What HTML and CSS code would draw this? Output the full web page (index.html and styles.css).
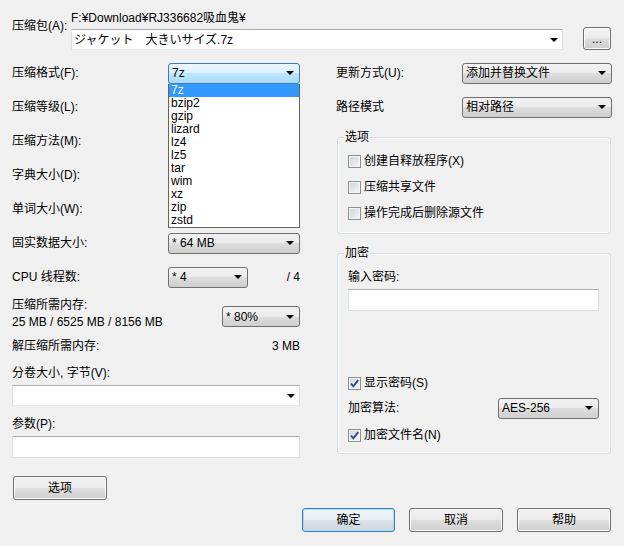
FILE: index.html
```html
<!DOCTYPE html>
<html lang="zh-CN">
<head>
  <meta charset="UTF-8">
  <title>添加到压缩包</title>
  <link rel="stylesheet" href="styles.css">
</head>
<body>
  <div class="dialog">
    <!-- 压缩包路径 -->
    <div class="archive-row">
      <span class="archive-label">压缩包(A):</span>
      <div class="archive-main">
        <div class="archive-path">F:¥Download¥RJ336682吸血鬼¥</div>
        <div class="combo edit"><span>ジャケット　大きいサイズ.7z</span></div>
      </div>
      <button class="btn browse">...</button>
    </div>

    <div class="columns">
      <!-- 左侧：压缩参数 -->
      <div class="col-left">
        <div class="row">
          <span>压缩格式(F):</span>
          <div class="combo-wrap">
            <div class="combo focus w-full"><span>7z</span></div>
            <ul class="droplist">
              <li class="sel">7z</li>
              <li>bzip2</li>
              <li>gzip</li>
              <li>lizard</li>
              <li>lz4</li>
              <li>lz5</li>
              <li>tar</li>
              <li>wim</li>
              <li>xz</li>
              <li>zip</li>
              <li>zstd</li>
            </ul>
          </div>
        </div>
        <!-- 这几个下拉框被展开的列表盖住 -->
        <div class="row">
          <span>压缩等级(L):</span>
          <div class="combo w-full"></div>
        </div>
        <div class="row">
          <span>压缩方法(M):</span>
          <div class="combo w-full"></div>
        </div>
        <div class="row">
          <span>字典大小(D):</span>
          <div class="combo w-full"></div>
        </div>
        <div class="row">
          <span>单词大小(W):</span>
          <div class="combo w-full"></div>
        </div>
        <div class="row">
          <span>固实数据大小:</span>
          <div class="combo w-full"><span>* 64 MB</span></div>
        </div>
        <div class="row">
          <span>CPU 线程数:</span>
          <div class="combo w-cpu"><span>* 4</span></div>
          <span class="row-end">/ 4</span>
        </div>

        <div class="mem-row">
          <div class="mem-text">
            <div>压缩所需内存:</div>
            <div>25 MB / 6525 MB / 8156 MB</div>
          </div>
          <div class="combo w-mem"><span>* 80%</span></div>
        </div>
        <div class="unpack-row">
          <span>解压缩所需内存:</span>
          <span>3 MB</span>
        </div>

        <div class="field-label split-label">分卷大小, 字节(V):</div>
        <div class="combo edit"><span></span></div>
        <div class="field-label param-label">参数(P):</div>
        <div class="textbox"></div>
        <button class="btn options">选项</button>
      </div>

      <!-- 右侧：更新方式与加密 -->
      <div class="col-right">
        <div class="row">
          <span>更新方式(U):</span>
          <div class="combo w-right"><span>添加并替换文件</span></div>
        </div>
        <div class="row">
          <span>路径模式</span>
          <div class="combo w-right"><span>相对路径</span></div>
        </div>

        <fieldset class="group group-options">
          <legend>选项</legend>
          <div class="check-row"><span class="checkbox"></span>创建自释放程序(X)</div>
          <div class="check-row"><span class="checkbox"></span>压缩共享文件</div>
          <div class="check-row"><span class="checkbox"></span>操作完成后删除源文件</div>
        </fieldset>

        <fieldset class="group group-crypt">
          <legend>加密</legend>
          <div class="field-label">输入密码:</div>
          <div class="textbox"></div>
          <div class="check-row show-pass">
            <span class="checkbox"><svg width="11" height="11" viewBox="0 0 11 11"><path d="M2 5.5 L4.3 8.3 L9.2 2.2" fill="none" stroke="#2b4a8f" stroke-width="1.9"/></svg></span>显示密码(S)
          </div>
          <div class="algo-row">
            <span>加密算法:</span>
            <div class="combo w-algo"><span>AES-256</span></div>
          </div>
          <div class="check-row">
            <span class="checkbox"><svg width="11" height="11" viewBox="0 0 11 11"><path d="M2 5.5 L4.3 8.3 L9.2 2.2" fill="none" stroke="#2b4a8f" stroke-width="1.9"/></svg></span>加密文件名(N)
          </div>
        </fieldset>
      </div>
    </div>

    <div class="footer">
      <button class="btn default w-ok">确定</button>
      <button class="btn w-act">取消</button>
      <button class="btn w-act">帮助</button>
    </div>
  </div>
</body>
</html>
```

FILE: styles.css
```css
/* 基础 */
* {
  box-sizing: border-box;
}
body {
  margin: 0;
  background: #f0f0f0;
  color: #000;
  font-family: "Liberation Sans", "Noto Sans CJK SC", "Noto Sans CJK JP", sans-serif;
  font-size: 12px;
  line-height: 14px;
}
.dialog {
  width: 624px;
  height: 546px;
  padding: 11px 12px 0 12px;
}

/* 压缩包一行 */
.archive-row {
  display: flex;
  align-items: flex-start;
}
.archive-label {
  width: 59px;
  margin-top: 8px;
}
.archive-main {
  width: 492px;
}
.archive-path {
  line-height: 14px;
}
.archive-main .combo {
  margin-top: 4px;
}
.browse {
  width: 28px;
  height: 23px;
  margin: 16px 0 0 20px;
  font-size: 10px;
  line-height: 14px;
}

/* 两栏 */
.columns {
  display: grid;
  grid-template-columns: 288px 276px;
  column-gap: 36px;
  margin-top: 6px;
}
.row {
  display: flex;
  align-items: center;
  height: 34px;
}
.col-left .row > span:first-child {
  flex: 0 0 156px;
}
.col-right .row > span:first-child {
  flex: 0 0 126px;
}
.row-end {
  margin-left: auto;
}

/* 下拉框 (Win7 风格) */
.combo {
  display: flex;
  align-items: center;
  height: 21px;
  padding-left: 3px;
  border: 1px solid #707070;
  border-radius: 3px;
  background: linear-gradient(#f2f2f2, #ebebeb 50%, #dddddd 50%, #cfcfcf);
  white-space: nowrap;
}
.combo::after {
  content: "";
  margin-left: auto;
  margin-right: 5px;
  border-top: 4px solid #000;
  border-left: 4px solid transparent;
  border-right: 4px solid transparent;
}
.combo.focus {
  border-color: #3c7fb1;
  background: linear-gradient(#eaf6fd, #d9f0fc 50%, #bee6fd 50%, #a7d9f5);
}
.combo.edit {
  border-radius: 0;
  border-color: #e2e3ea #dbdfe6 #e3e9ef #dbdfe6;
  border-top-color: #abadb3;
  background: #fff;
  padding-left: 2px;
}
.combo.edit::after {
  margin-right: 4px;
}
.w-full { width: 132px; }
.w-cpu { width: 80px; }
.w-mem { width: 78px; }
.w-right { width: 150px; }
.w-algo { width: 101px; }

/* 展开的格式列表 */
.combo-wrap {
  position: relative;
}
.droplist {
  position: absolute;
  top: 21px;
  left: 0;
  z-index: 2;
  width: 132px;
  margin: 0;
  padding: 0;
  list-style: none;
  background: #fff;
  border: 1px solid #646464;
  border-top: none;
}
.droplist li {
  height: 13px;
  line-height: 13px;
  padding-left: 2px;
}
.droplist li.sel {
  background: #3399ff;
  color: #fff;
}

/* 内存 */
.mem-row {
  display: flex;
  justify-content: space-between;
  align-items: flex-start;
  margin-top: 3px;
}
.mem-text div {
  line-height: 17px;
}
.mem-row .combo {
  margin-top: 9px;
}
.unpack-row {
  display: flex;
  justify-content: space-between;
  margin-top: 8px;
}

/* 文本输入 */
.field-label {
  line-height: 14px;
}
.split-label {
  margin-top: 13px;
  margin-bottom: 5px;
}
.param-label {
  margin-top: 11px;
  margin-bottom: 5px;
}
.textbox {
  height: 22px;
  background: #fff;
  border: 1px solid #dbdfe6;
  border-top-color: #abadb3;
  border-left-color: #e2e3ea;
}

/* 按钮 */
.btn {
  display: block;
  padding: 0;
  font: inherit;
  color: #000;
  border: 1px solid #707070;
  border-radius: 3px;
  background: linear-gradient(#f2f2f2, #ebebeb 48%, #dddddd 52%, #cfcfcf);
  box-shadow: inset 0 0 0 1px #fbfbfb;
}
.btn.default {
  border-color: #3c7fb1;
  box-shadow: inset 0 0 0 1px #a9dcf5;
  background: linear-gradient(#f0f6fa, #e6eef4 48%, #d9e2e8 52%, #ccd6dc);
}
.options {
  width: 94px;
  height: 24px;
  margin: 18px 0 0 1px;
}
.footer {
  display: flex;
  justify-content: flex-end;
  gap: 14px;
  margin: 8px 1px 0 0;
}
.footer .btn {
  height: 24px;
}
.w-ok { width: 93px; }
.w-act { width: 94px; }

/* 分组框 */
.group {
  margin: 0 1px;
  padding: 0 11px 0 10px;
  border: 1px solid #d5dfe5;
  border-radius: 3px;
  box-shadow: inset 0 0 0 1px #fcfcfc;
}
.group legend {
  margin-left: -4px;
  padding: 0 1px;
  line-height: 14px;
  background: #f0f0f0;
}
.group-options {
  margin-top: 6px;
  padding-top: 4px;
  padding-bottom: 7px;
}
.group-crypt {
  margin-top: 12px;
  padding-top: 10px;
  padding-bottom: 5px;
}
.group-crypt .field-label {
  margin-bottom: 5px;
}

/* 复选框 */
.check-row {
  display: flex;
  align-items: center;
  height: 26px;
}
.checkbox {
  display: flex;
  align-items: center;
  justify-content: center;
  width: 13px;
  height: 13px;
  margin-right: 3px;
  border: 1px solid #8e8f8f;
  background: linear-gradient(135deg, #cfd3d8, #f7f7f7);
  box-shadow: inset 0 0 0 1px #f4f4f4;
}
.show-pass {
  margin-top: 59px;
}
.algo-row {
  display: flex;
  align-items: center;
  justify-content: space-between;
  height: 24px;
}
.algo-row + .check-row {
  margin-top: 2px;
}
```
